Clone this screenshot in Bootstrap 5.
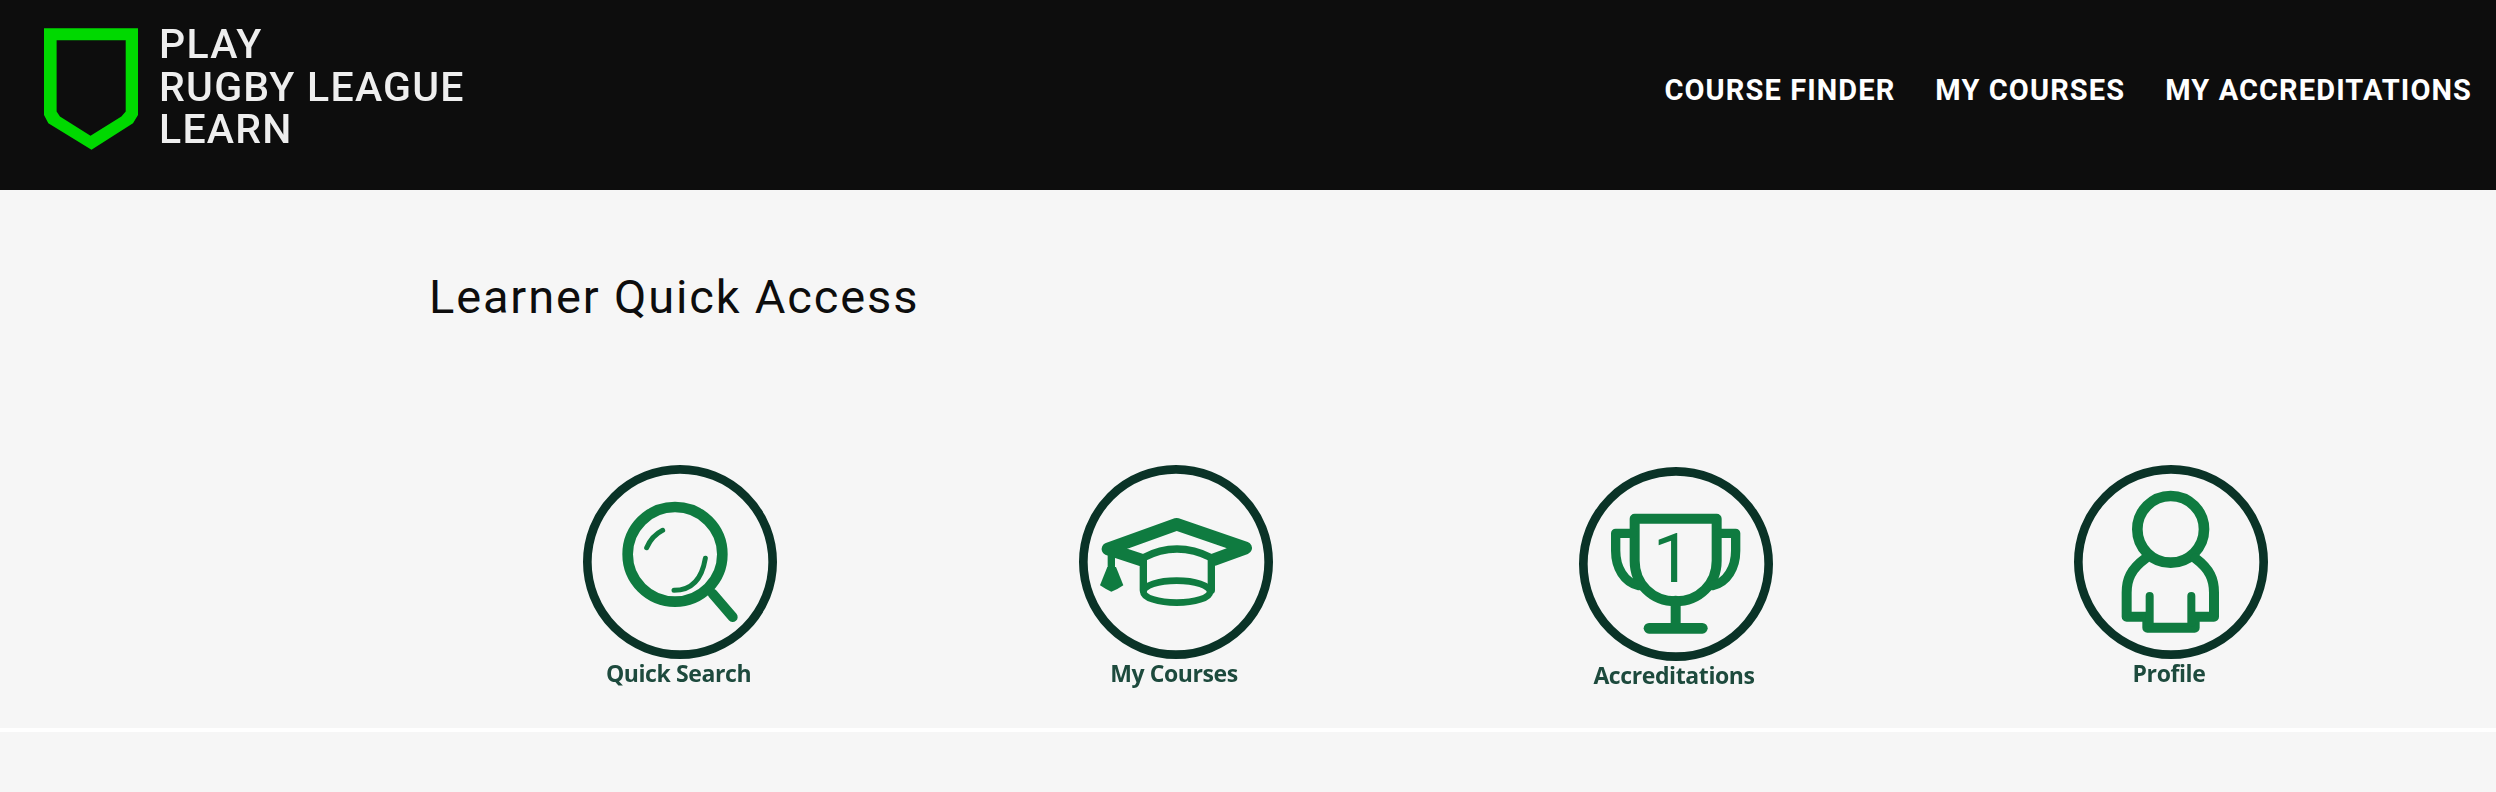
<!DOCTYPE html>
<html lang="en">
<head>
    <meta charset="UTF-8">
    <meta name="viewport" content="width=device-width, initial-scale=1.0">
    <title>Play Rugby League Learn</title>
    <link rel="stylesheet" href="https://cdn.jsdelivr.net/npm/bootstrap@5.3.0/dist/css/bootstrap.min.css">
    <style>
        body { background: #f6f6f6; font-family: Roboto, "Liberation Sans", sans-serif; }
        .top-bar { background: #0d0d0d; height: 190px; padding: 28px 24px 0 44px; align-items: flex-start; }
        .brand-wrap { gap: 21px; padding: 0; margin: 0; }
        .brand-text { color: #eee; font-size: 41px; line-height: 42.5px; font-weight: 500; letter-spacing: 1.25px; margin-top: -5px; filter: blur(.5px); }
        .main-links { gap: 40px; margin-top: 46px; }
        .top-bar .main-links .nav-link { color: #fff; padding: 0; font-size: 29px; line-height: 32px; font-weight: 700; letter-spacing: 1.1px; }
        .quick-area { height: 542px; border-bottom: 4px solid #fff; padding: 79px 0 0 432px; }
        .quick-title { font-size: 47px; line-height: 56px; font-weight: 400; letter-spacing: 1.85px; color: #0d0d0d; margin: 0 0 137px -3px; }
        .tile-grid { display: grid; grid-template-columns: 496px 495px 505px 485px; }
        .tile-grid a { color: #1d4a3d; text-decoration: none; }
        .tile-grid svg { display: block; filter: blur(.7px); }
        .ring { fill: none; stroke: #0a3327; stroke-width: 26; }
        .ink { fill: none; stroke: #0f7b40; stroke-linecap: round; stroke-linejoin: round; }
        .ink-fill { fill: #0f7b40; }
        .tile-label { font-family: "Open Sans", "Liberation Sans", sans-serif; font-weight: 700; font-size: 23px; line-height: 30px; letter-spacing: -.4px; padding-right: 3px; margin-top: -4px; filter: blur(.6px); }
        .tile-low { padding-top: 2px; }
    </style>
</head>
<body>
    <nav class="navbar navbar-expand top-bar">
        <a class="navbar-brand d-flex brand-wrap" href="#">
            <svg width="94" height="122" viewBox="132 84 283 366">
                <path fill="#00d900" fill-rule="evenodd" d="M132 84H415V345L400 370L275 450L145 370L132 345ZM170 120V335L180 350L272 408L365 350L378 335V120Z"/>
            </svg>
            <span class="brand-text">PLAY<br>RUGBY LEAGUE<br>LEARN</span>
        </a>
        <ul class="navbar-nav ms-auto main-links">
            <li class="nav-item"><a class="nav-link" href="#">COURSE FINDER</a></li>
            <li class="nav-item"><a class="nav-link" href="#">MY COURSES</a></li>
            <li class="nav-item"><a class="nav-link" href="#">MY ACCREDITATIONS</a></li>
        </ul>
    </nav>

    <section class="quick-area">
        <h1 class="quick-title">Learner Quick Access</h1>
        <div class="tile-grid">
            <a href="#" class="d-flex flex-column align-items-center">
                <svg width="200" height="200" viewBox="90 33 600 600">
                    <circle class="ring" cx="390" cy="333" r="278"/>
                    <circle class="ink" cx="375" cy="310" r="142" stroke-width="32"/>
                    <path class="ink" stroke-width="30" d="M488 428L548 498"/>
                    <path class="ink" stroke-width="15" d="M290 290Q306 254 338 238"/>
                    <path class="ink" stroke-width="15" d="M372 418Q450 418 466 322"/>
                </svg>
                <span class="tile-label">Quick Search</span>
            </a>
            <a href="#" class="d-flex flex-column align-items-center">
                <svg width="200" height="200" viewBox="76 35 600 600">
                    <circle class="ring" cx="376" cy="335" r="278"/>
                    <path class="ink" stroke-width="38" d="M172 296L378 222L585 293L490 328M270 328L172 296"/>
                    <path class="ink" stroke-width="22" d="M278 322Q378 270 482 322V420M278 322V420"/>
                    <ellipse class="ink" cx="378" cy="424" rx="100" ry="33" stroke-width="20"/>
                    <path class="ink" stroke-width="22" d="M182 305V365"/>
                    <path class="ink-fill" d="M170 350H196L218 405L200 416L182 424L166 416L148 405Z"/>
                </svg>
                <span class="tile-label">My Courses</span>
            </a>
            <a href="#" class="d-flex flex-column align-items-center tile-low">
                <svg width="200" height="200" viewBox="76 40 600 600">
                    <circle class="ring" cx="376" cy="340" r="278"/>
                    <path class="ink" stroke-width="30" d="M252 204H498V330C498 400 445 452 375 452C305 452 252 400 252 330Z"/>
                    <path class="ink" stroke-width="28" d="M245 248H195V300C195 350 220 395 265 405"/>
                    <path class="ink" stroke-width="28" d="M505 248H555V300C555 350 530 395 485 405"/>
                    <path class="ink" stroke-width="30" d="M375 450V530"/>
                    <path class="ink" stroke-width="32" d="M295 533H455"/>
                    <text x="364" y="393" text-anchor="middle" font-family="Roboto, sans-serif" font-weight="400" font-size="204" class="ink-fill">1</text>
                </svg>
                <span class="tile-label">Accreditations</span>
            </a>
            <a href="#" class="d-flex flex-column align-items-center">
                <svg width="200" height="200" viewBox="61 33 600 600">
                    <circle class="ring" cx="361" cy="333" r="278"/>
                    <circle class="ink" cx="360" cy="235" r="100" stroke-width="32"/>
                    <path class="ink" stroke-width="30" d="M285 322C240 355 228 385 228 425V497H290V530H432V497H490V425C490 385 478 355 434 322"/>
                    <path class="ink" stroke-width="24" d="M297 435V515M422 435V515"/>
                </svg>
                <span class="tile-label">Profile</span>
            </a>
        </div>
    </section>

    <script src="https://cdn.jsdelivr.net/npm/bootstrap@5.3.0/dist/js/bootstrap.bundle.min.js"></script>
</body>
</html>
